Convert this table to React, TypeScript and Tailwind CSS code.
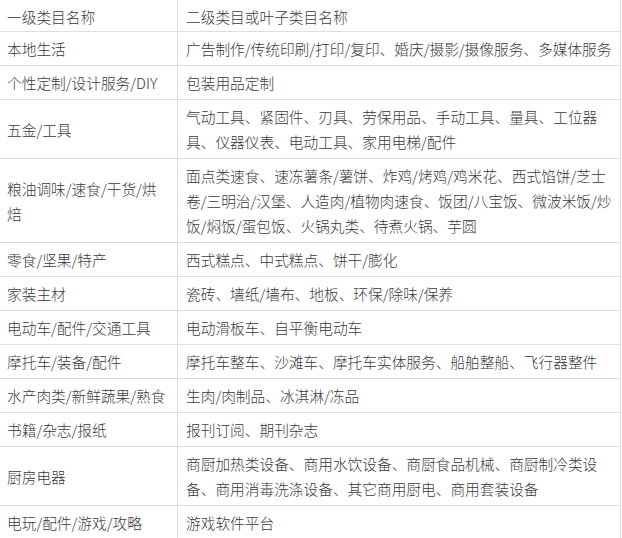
import React from "react";

const rows: { a: string[]; b: string[] }[] = [
  { a: ["本地生活"], b: ["广告制作/传统印刷/打印/复印、婚庆/摄影/摄像服务、多媒体服务"] },
  { a: ["个性定制/设计服务/DIY"], b: ["包装用品定制"] },
  { a: ["五金/工具"], b: ["气动工具、紧固件、刃具、劳保用品、手动工具、量具、工位器", "具、仪器仪表、电动工具、家用电梯/配件"] },
  {
    a: ["粮油调味/速食/干货/烘", "焙"],
    b: [
      "面点类速食、速冻薯条/薯饼、炸鸡/烤鸡/鸡米花、西式馅饼/芝士",
      "卷/三明治/汉堡、人造肉/植物肉速食、饭团/八宝饭、微波米饭/炒",
      "饭/焖饭/蛋包饭、火锅丸类、待煮火锅、芋圆",
    ],
  },
  { a: ["零食/坚果/特产"], b: ["西式糕点、中式糕点、饼干/膨化"] },
  { a: ["家装主材"], b: ["瓷砖、墙纸/墙布、地板、环保/除味/保养"] },
  { a: ["电动车/配件/交通工具"], b: ["电动滑板车、自平衡电动车"] },
  { a: ["摩托车/装备/配件"], b: ["摩托车整车、沙滩车、摩托车实体服务、船舶整船、飞行器整件"] },
  { a: ["水产肉类/新鲜蔬果/熟食"], b: ["生肉/肉制品、冰淇淋/冻品"] },
  { a: ["书籍/杂志/报纸"], b: ["报刊订阅、期刊杂志"] },
  { a: ["厨房电器"], b: ["商厨加热类设备、商用水饮设备、商厨食品机械、商厨制冷类设", "备、商用消毒洗涤设备、其它商用厨电、商用套装设备"] },
  { a: ["电玩/配件/游戏/攻略"], b: ["游戏软件平台"] },
];

function Lines({ items }: { items: string[] }) {
  return (
    <div>
      {items.map((t, i) => (
        <div key={i} className="whitespace-nowrap">
          {t}
        </div>
      ))}
    </div>
  );
}

export default function App() {
  return (
    <div
      className="w-[622px] h-[538px] overflow-hidden bg-white text-[#3a3a3a] font-light text-[14.7px] leading-[25px]"
      style={{ fontFamily: '"Noto Sans CJK SC", "Noto Sans", sans-serif' }}
    >
      <div className="w-[621px] border-r border-[#dddddd]">
        <div className="flex h-[32px] border-b border-[#dddddd]">
          <div className="w-[178px] shrink-0 border-r border-[#dddddd] pl-[7px] flex items-center pt-[1px]">
            一级类目名称
          </div>
          <div className="flex-1 pl-[8px] flex items-center pt-[1px]">二级类目或叶子类目名称</div>
        </div>
        {rows.map((r, i) => (
          <div key={i} className="flex border-b border-[#dddddd]">
            <div className="w-[178px] shrink-0 border-r border-[#dddddd] pl-[7px] py-[4px] flex items-center">
              <Lines items={r.a} />
            </div>
            <div className="flex-1 pl-[8px] py-[4px] flex items-center">
              <Lines items={r.b} />
            </div>
          </div>
        ))}
      </div>
    </div>
  );
}
